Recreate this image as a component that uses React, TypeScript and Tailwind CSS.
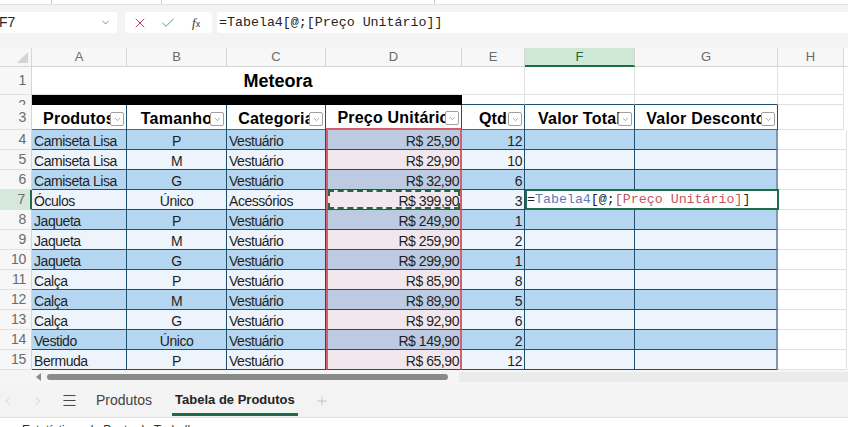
import React from 'react';
import { X, Check, ChevronDown, ChevronLeft, ChevronRight, Menu, Plus } from 'lucide-react';

type Row = { n: number; a: string; b: string; c: string; d: string; e: string };

const rows: Row[] = [
  { n: 4, a: 'Camiseta Lisa', b: 'P', c: 'Vestuário', d: 'R$ 25,90', e: '12' },
  { n: 5, a: 'Camiseta Lisa', b: 'M', c: 'Vestuário', d: 'R$ 29,90', e: '10' },
  { n: 6, a: 'Camiseta Lisa', b: 'G', c: 'Vestuário', d: 'R$ 32,90', e: '6' },
  { n: 7, a: 'Óculos', b: 'Único', c: 'Acessórios', d: 'R$ 399,90', e: '3' },
  { n: 8, a: 'Jaqueta', b: 'P', c: 'Vestuário', d: 'R$ 249,90', e: '1' },
  { n: 9, a: 'Jaqueta', b: 'M', c: 'Vestuário', d: 'R$ 259,90', e: '2' },
  { n: 10, a: 'Jaqueta', b: 'G', c: 'Vestuário', d: 'R$ 299,90', e: '1' },
  { n: 11, a: 'Calça', b: 'P', c: 'Vestuário', d: 'R$ 85,90', e: '8' },
  { n: 12, a: 'Calça', b: 'M', c: 'Vestuário', d: 'R$ 89,90', e: '5' },
  { n: 13, a: 'Calça', b: 'G', c: 'Vestuário', d: 'R$ 92,90', e: '6' },
  { n: 14, a: 'Vestido', b: 'Único', c: 'Vestuário', d: 'R$ 149,90', e: '2' },
  { n: 15, a: 'Bermuda', b: 'P', c: 'Vestuário', d: 'R$ 65,90', e: '12' },
];

// cells use a slightly tightened Arial-width face to match Excel's narrow default font
const CELL_FONT = "font-['Liberation_Sans',Arial,sans-serif] text-[14px] tracking-[-0.45px]";

function FilterBtn() {
  return (
    <span className="absolute right-[2px] bottom-[3px] w-[14px] h-[14px] bg-white border border-[#a0a0a0] rounded-[2px] flex items-center justify-center">
      <ChevronDown size={9} strokeWidth={1.6} className="text-[#707070]" />
    </span>
  );
}

function RowHead({ n, sel, h = 'h-[20px]' }: { n: number; sel?: boolean; h?: string }) {
  return (
    <div
      className={`w-[32px] ${h} shrink-0 overflow-hidden border-b border-b-[#e1e1e1] ${
        sel ? 'bg-[#d5e8da] border-r-2 border-r-[#1e6b47]' : 'bg-[#f7f7f7] border-r border-r-[#d6d6d6]'
      } flex items-center justify-end pr-[5px] font-['Liberation_Sans',Arial,sans-serif] text-[14px] tracking-[-0.3px] text-[#6b6b6b]`}
    >
      {n}
    </div>
  );
}

function HeadCell({ w, label, extra = '' }: { w: string; label: string; extra?: string }) {
  return (
    <div
      className={`${w} h-[25px] shrink-0 relative overflow-hidden bg-white border-r border-r-[#1f4e6f] border-b ${extra} flex items-end justify-center whitespace-nowrap font-bold text-[16px] tracking-[0.2px] leading-[20px] text-black`}
    >
      {label}
      <FilterBtn />
    </div>
  );
}

function DataRow({ r, i }: { r: Row; i: number }) {
  const dark = i % 2 === 0;
  const sel = r.n === 7;
  const band = dark ? 'bg-[#b5d6f1]' : 'bg-[#eef4fc]';
  const dband = dark ? 'bg-[#bccae2]' : 'bg-[#f3e7ee]';
  const base = `h-[20px] shrink-0 border-b border-b-[#1f4e6f] whitespace-nowrap overflow-hidden leading-[22px] text-[#1f1f1f] ${CELL_FONT}`;
  return (
    <div className="flex">
      <RowHead n={r.n} sel={sel} />
      <div className={`w-[95px] ${base} ${band} border-r border-r-[#1f4e6f] pl-[2px]`}>{r.a}</div>
      <div className={`w-[100px] ${base} ${band} border-r border-r-[#1f4e6f] text-center`}>{r.b}</div>
      <div className={`w-[99px] ${base} ${band} border-r border-r-[#1f4e6f] pl-[2px]`}>{r.c}</div>
      <div className={`w-[136px] ${base} ${dband} relative border-x-2 border-x-[#d6606a] text-right pr-[1px]`}>
        {r.d}
        {sel && <span className="absolute inset-0 border-2 border-dashed border-[#1e6b47]" />}
      </div>
      <div className={`w-[63px] ${base} ${band} border-r border-r-[#1f4e6f] text-right pr-[2px]`}>{r.e}</div>
      {sel ? (
        <div className="w-[254px] h-[21px] -mt-[1px] shrink-0 bg-white border-2 border-[#1e6b47] whitespace-nowrap overflow-hidden font-['Liberation_Mono',monospace] text-[13.3px] leading-[18px] text-[#222]">
          =<span className="text-[#5b7bb6]">Tabela4</span>[@;<span className="text-[#c4535b]">[Preço Unitário]</span>]
        </div>
      ) : (
        <>
          <div className={`w-[110px] ${base} ${band} border-r border-r-[#1f4e6f]`} />
          <div className={`w-[143px] ${base} ${band} border-r-2 border-r-[#7f98b4]`} />
        </>
      )}
      <div className={`${sel ? 'w-[68px]' : 'w-[69px]'} h-[20px] shrink-0 bg-white border-r border-b border-[#e1e1e1]`} />
    </div>
  );
}

export default function App() {
  const colHeads: { l: string; w: string }[] = [
    { l: 'A', w: 'w-[95px]' },
    { l: 'B', w: 'w-[100px]' },
    { l: 'C', w: 'w-[99px]' },
    { l: 'D', w: 'w-[136px]' },
    { l: 'E', w: 'w-[63px]' },
    { l: 'F', w: 'w-[110px]' },
    { l: 'G', w: 'w-[143px]' },
    { l: 'H', w: 'w-[66px]' },
  ];

  return (
    <div className="w-[848px] h-[427px] overflow-hidden bg-[#f3f3f3] flex flex-col font-['Liberation_Sans',Arial,sans-serif]">
      {/* ribbon bottom edge */}
      <div className="h-[5px] shrink-0 flex bg-white border-b border-[#e3e3e3]">
        <div className="w-[52px] border-r border-[#d0d0d0]" />
        <div className="w-[110px] border-r border-[#d0d0d0]" />
        <div className="w-[273px] border-r border-[#d0d0d0]" />
        <div className="flex-1" />
      </div>

      {/* formula bar */}
      <div className="h-[43px] shrink-0 flex items-start pt-[7px]">
        <div className="w-[117px] h-[21px] bg-white rounded-r-[3px] flex items-center justify-between pr-[6px] text-[14px] text-[#242424]">
          <span className="-ml-[1px]">F7</span>
          <ChevronDown size={11} strokeWidth={1.5} className="text-[#555]" />
        </div>
        <div className="ml-[8px] w-[87px] h-[21px] bg-white rounded-[3px] flex items-center">
          <X size={16} strokeWidth={1.4} className="ml-[7px] text-[#c4314b]" />
          <Check size={16} strokeWidth={1.4} className="ml-[12px] text-[#3f9a5a]" />
          <span className="ml-[16px] font-['Liberation_Serif',serif] italic text-[13px] text-[#333] leading-none">
            f<span className="text-[9px] not-italic font-['Liberation_Sans',sans-serif]">x</span>
          </span>
        </div>
        <div className="ml-[5px] flex-1 h-[21px] bg-white rounded-l-[3px] flex items-center pl-[2px] font-['Liberation_Mono',monospace] text-[13.3px] text-[#242424] whitespace-nowrap">
          =Tabela4[@;[Preço Unitário]]
        </div>
      </div>

      {/* sheet */}
      <div className="flex flex-col bg-white shrink-0">
        {/* column headers */}
        <div className="flex h-[19px] bg-[#f7f7f7]">
          <div className="w-[32px] shrink-0 border-r border-b border-[#d6d6d6] relative">
            <span className="absolute right-[3px] bottom-[3px] w-0 h-0 border-l-[11px] border-l-transparent border-b-[11px] border-b-[#d4d4d4]" />
          </div>
          {colHeads.map((c) =>
            c.l === 'F' ? (
              <div
                key={c.l}
                className={`${c.w} shrink-0 bg-[#cfe8d6] border-r border-r-[#d6d6d6] border-b-2 border-b-[#1e6b47] text-center text-[13px] leading-[18px] text-[#1e6b47]`}
              >
                {c.l}
              </div>
            ) : (
              <div
                key={c.l}
                className={`${c.w} shrink-0 border-r border-b border-[#d6d6d6] text-center text-[13px] leading-[18px] text-[#6b6b6b]`}
              >
                {c.l}
              </div>
            )
          )}
          <div className="flex-1 border-b border-[#d6d6d6] bg-white" />
        </div>

        {/* row 1 */}
        <div className="flex">
          <RowHead n={1} h="h-[28px]" />
          <div className="w-[493px] h-[28px] shrink-0 border-r border-b border-[#e1e1e1] flex items-center justify-center font-bold text-[18px] leading-[28px] text-black">
            Meteora
          </div>
          <div className="w-[110px] h-[28px] shrink-0 border-r border-b border-[#e1e1e1]" />
          <div className="w-[143px] h-[28px] shrink-0 border-r border-b border-[#e1e1e1]" />
          <div className="w-[66px] h-[28px] shrink-0 border-r border-b border-[#e1e1e1]" />
        </div>

        {/* row 2 */}
        <div className="flex">
          <div className="w-[32px] h-[10px] shrink-0 overflow-hidden bg-[#f7f7f7] border-r border-[#d6d6d6] text-right pr-[5px] text-[14px] leading-[20px] text-[#6b6b6b]">
            2
          </div>
          <div className="w-[430px] h-[10px] shrink-0 bg-black" />
          <div className="w-[63px] h-[10px] shrink-0 border-r border-r-[#e1e1e1] border-b border-b-[#1f4e6f]" />
          <div className="w-[110px] h-[10px] shrink-0 border-r border-r-[#e1e1e1] border-b border-b-[#1f4e6f]" />
          <div className="w-[143px] h-[10px] shrink-0 border-r border-r-[#e1e1e1] border-b border-b-[#1f4e6f]" />
          <div className="w-[66px] h-[10px] shrink-0 border-r border-b border-[#e1e1e1]" />
        </div>

        {/* row 3: table header */}
        <div className="flex">
          <RowHead n={3} h="h-[25px]" />
          <HeadCell w="w-[95px]" label="Produtos" extra="border-b-[#3e6d98]" />
          <HeadCell w="w-[100px]" label="Tamanho" extra="border-b-[#3e6d98]" />
          <HeadCell w="w-[99px]" label="Categoria" extra="border-b-[#3e6d98]" />
          <HeadCell w="w-[136px]" label="Preço Unitário" extra="border-b-2 border-b-[#d6606a]" />
          <HeadCell w="w-[63px]" label="Qtd" extra="border-b-[#3e6d98]" />
          <HeadCell w="w-[110px]" label="Valor Total" extra="border-b-[#3e6d98]" />
          <HeadCell w="w-[143px]" label="Valor Desconto" extra="border-b-[#3e6d98]" />
          <div className="w-[66px] h-[25px] shrink-0 border-r border-b border-[#e1e1e1]" />
        </div>

        {rows.map((r, i) => (
          <DataRow key={r.n} r={r} i={i} />
        ))}
      </div>

      {/* horizontal scrollbar */}
      <div className="h-[14px] shrink-0 flex items-center bg-[#f5f5f5]">
        <span className="ml-[36px] w-0 h-0 border-y-[4px] border-y-transparent border-r-[5px] border-r-[#8a8a8a]" />
        <div className="ml-[6px] w-[401px] h-[6px] rounded-full bg-[#8a8a8a]" />
        <div className="ml-[11px] flex-1 h-[10px] bg-[#ebebeb]" />
      </div>

      {/* sheet tabs */}
      <div className="h-[33px] shrink-0 flex items-stretch text-[14px]">
        <div className="w-[15px] flex items-center justify-center">
          <ChevronLeft size={14} strokeWidth={1.3} className="text-[#c6c6c6]" />
        </div>
        <div className="ml-[15px] w-[15px] flex items-center justify-center">
          <ChevronRight size={14} strokeWidth={1.3} className="text-[#c6c6c6]" />
        </div>
        <div className="ml-[16px] flex items-center">
          <Menu size={17} strokeWidth={1.4} className="text-[#444]" />
        </div>
        <div className="ml-[18px] flex items-center text-[#424242]">Produtos</div>
        <div className="ml-[20px] px-[3px] flex items-center border-b-[3px] border-[#1e6b47] pt-[3px] mb-[1px] font-bold text-[13px] text-[#242424]">
          Tabela de Produtos
        </div>
        <div className="ml-[17px] flex items-center">
          <Plus size={14} strokeWidth={1.3} className="text-[#b5b5b5]" />
        </div>
      </div>

      {/* status bar */}
      <div className="flex-1 bg-white border-t border-[#e0e0e0] pl-[22px] pt-[3px] text-[12px] text-[#333] whitespace-nowrap">
        Estatísticas da Pasta de Trabalho
      </div>
    </div>
  );
}
